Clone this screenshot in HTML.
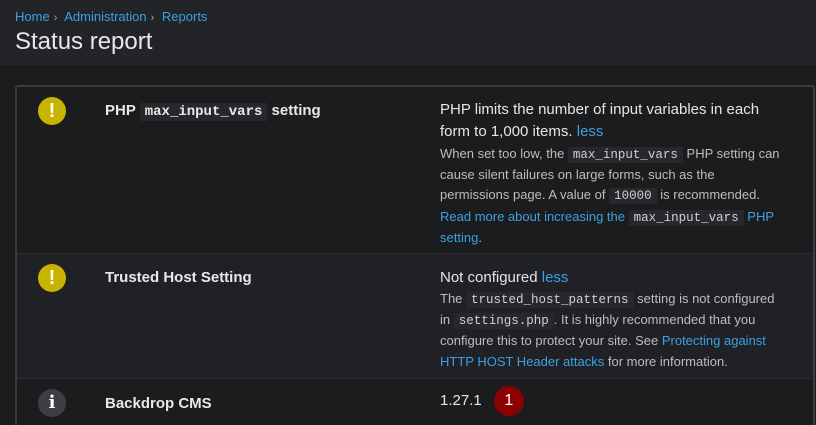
<!DOCTYPE html>
<html style="height:425px;overflow:hidden"><head><meta charset="utf-8"><style>
*{margin:0;padding:0;box-sizing:border-box}
body{width:816px;height:425px;overflow:hidden;background:#1b1c1e;font-family:"Liberation Sans",sans-serif;color:#e6e6e6;position:relative}
.hdr{position:absolute;left:0;top:0;width:816px;height:65px;background:#222428}
.bc{position:absolute;left:15px;top:9px;font-size:13px;color:#3ea0e4}
.bc span{color:#aaa;margin:0 4px;font-size:11px}
h1{position:absolute;left:15px;top:28px;font-size:24px;font-weight:normal;color:#e8e8e8}
.box{position:absolute;left:15px;top:85px;width:800px;height:340px;border:2px solid #3a3c40;border-bottom:none;border-radius:3px 3px 0 0;background:#1b1c1e}
.row{position:absolute;left:0;width:796px}
.r1{top:0;height:166px}
.r2{top:166px;height:126px;background:#1f2124;border-top:1px solid #2a2c30;border-bottom:1px solid #2a2c30}
.r3{top:292px;height:80px}
.ic{position:absolute;left:21px;width:28px;height:28px;border-radius:50%;color:#fff;font-weight:bold;font-size:20px;text-align:center;line-height:28px}
.w{background:#c8b400}
.i{background:#3c3e42;font-family:"DejaVu Serif",serif;font-size:18px}
.t{position:absolute;left:88px;font-weight:bold;font-size:15px;color:#e8e8e8}
.d{position:absolute;left:423px;white-space:nowrap}
.big{font-size:15px;line-height:22px;color:#e6e6e6}
.sm{font-size:13px;line-height:20.2px;color:#bdbdbd;margin-top:1px}
code{font-family:"Liberation Mono",monospace;font-size:12.5px;background:#26282b;padding:1px 5px;color:#d0d0d0}
.t code{font-size:14px;color:#e8e8e8;font-weight:bold}
a{color:#3ea0e4;text-decoration:none}
.badge{display:inline-block;width:30px;height:30px;border-radius:50%;background:#8b0000;color:#fff;text-align:center;line-height:30px;font-size:16px;margin-left:8px;vertical-align:middle}
</style></head><body>
<div class="hdr"><div class="bc">Home<span>›</span> Administration<span>›</span> Reports</div><h1>Status report</h1></div>
<div class="box">
<div class="row r1">
<div class="ic w" style="top:10px">!</div>
<div class="t" style="top:15px">PHP <code>max_input_vars</code> setting</div>
<div class="d" style="top:12px"><div class="big">PHP limits the number of input variables in each<br>form to 1,000 items. <a>less</a></div>
<div class="sm">When set too low, the <code>max_input_vars</code> PHP setting can<br>cause silent failures on large forms, such as the<br>permissions page. A value of <code>10000</code> is recommended.<br><a>Read more about increasing the <code>max_input_vars</code> PHP<br>setting</a>.</div></div>
</div>
<div class="row r2">
<div class="ic w" style="top:10px">!</div>
<div class="t" style="top:15px">Trusted Host Setting</div>
<div class="d" style="top:13px"><div class="big">Not configured <a>less</a></div>
<div class="sm" style="margin-top:0">The <code>trusted_host_patterns</code> setting is not configured<br>in <code>settings.php</code>. It is highly recommended that you<br>configure this to protect your site. See <a>Protecting against<br>HTTP HOST Header attacks</a> for more information.</div></div>
</div>
<div class="row r3">
<div class="ic i" style="top:10px">i</div>
<div class="t" style="top:16px">Backdrop CMS</div>
<div class="d big" style="top:7px">1.27.1 <span class="badge">1</span></div>
</div>
</div>
</body></html>
